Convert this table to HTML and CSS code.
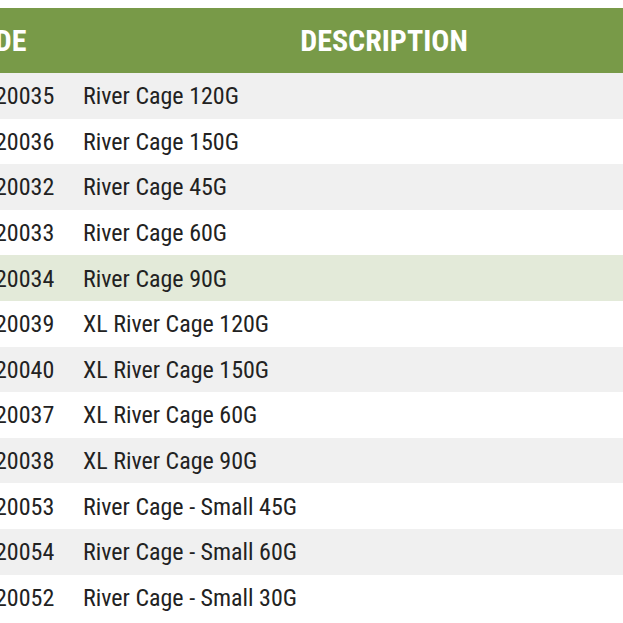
FILE: index.html
```html
<!DOCTYPE html>
<html>
<head>
<meta charset="utf-8">
<link rel="stylesheet" href="styles.css">
</head>
<body>
<div class="viewport">
  <table class="products">
    <colgroup>
      <col class="col-code">
      <col class="col-desc">
    </colgroup>
    <thead>
      <tr>
        <th class="head-code">CODE</th>
        <th class="head-desc">DESCRIPTION</th>
      </tr>
    </thead>
    <tbody>
      <tr><td class="code">20035</td><td class="desc">River Cage 120G</td></tr>
      <tr><td class="code">20036</td><td class="desc">River Cage 150G</td></tr>
      <tr><td class="code">20032</td><td class="desc">River Cage 45G</td></tr>
      <tr><td class="code">20033</td><td class="desc">River Cage 60G</td></tr>
      <tr class="hover"><td class="code">20034</td><td class="desc">River Cage 90G</td></tr>
      <tr><td class="code">20039</td><td class="desc">XL River Cage 120G</td></tr>
      <tr><td class="code">20040</td><td class="desc">XL River Cage 150G</td></tr>
      <tr><td class="code">20037</td><td class="desc">XL River Cage 60G</td></tr>
      <tr><td class="code">20038</td><td class="desc">XL River Cage 90G</td></tr>
      <tr><td class="code">20053</td><td class="desc">River Cage - Small 45G</td></tr>
      <tr><td class="code">20054</td><td class="desc">River Cage - Small 60G</td></tr>
      <tr><td class="code">20052</td><td class="desc">River Cage - Small 30G</td></tr>
    </tbody>
  </table>
</div>
</body>
</html>
```
FILE: styles.css
```css
html, body {
  margin: 0;
  padding: 0;
  background: #ffffff;
}
.viewport {
  width: 623px;
  height: 623px;
  overflow: hidden;
  padding-top: 8px;
  box-sizing: border-box;
}
.products {
  border-collapse: collapse;
  margin-left: -88px;
  width: 786px;
  table-layout: fixed;
  font-family: "Roboto Condensed", Roboto, "Liberation Sans", sans-serif;
  color: #222222;
}
.col-code { width: 158px; }
.col-desc { width: 628px; }
.products thead th {
  background: #789a48;
  color: #ffffff;
  font-weight: 700;
  font-size: 30px;
  height: 65px;
  padding: 0;
  text-align: center;
  vertical-align: middle;
}
.products thead th.head-code { text-indent: 4px; }
.products tbody tr:nth-child(odd) { background: #f0f0f0; }
.products tbody tr:nth-child(even) { background: #ffffff; }
.products tbody tr.hover { background: #e3ead9; }
.products td {
  height: 45.6px;
  padding: 1px 0 0 0;
  font-size: 24px;
  line-height: 1;
  vertical-align: middle;
  box-sizing: border-box;
}
.products td.code { padding-left: 83px; }
.products td.desc { padding-left: 13px; }
```
